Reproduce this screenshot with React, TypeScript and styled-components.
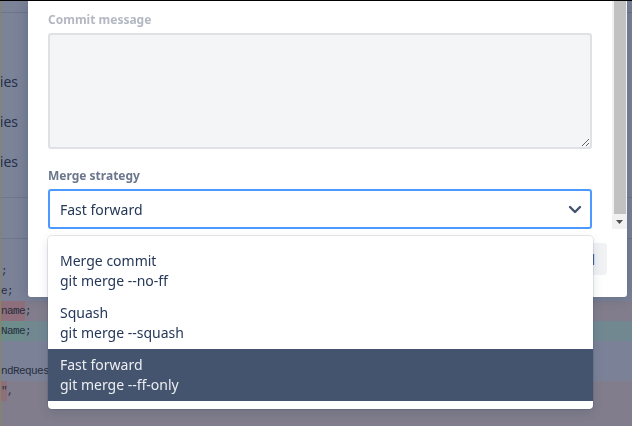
import React from "react";
import styled, { createGlobalStyle } from "styled-components";

const Global = createGlobalStyle`
  * { box-sizing: border-box; }
  html, body { margin: 0; padding: 0; width: 632px; height: 426px; overflow: hidden; }
  body {
    background: #7b8398;
    border-top: 1px solid #000;
    font-family: "Noto Sans", "DejaVu Sans", sans-serif;
  }
`;

const Page = styled.div`
  width: 632px;
  height: 425px;
  display: flex;
  flex-direction: column;
  border-left: 1px solid #8b8365;
  background: #7b8398;
  overflow: hidden;
`;

const TopBar = styled.div`
  height: 12px;
  flex: none;
  border-bottom: 1px solid #6c7589;
`;

const Nav = styled.nav`
  height: 185px;
  flex: none;
  padding-top: 48px;
  border-bottom: 1px solid #6e778b;
`;

const NavItem = styled.div`
  width: 17px;
  height: 40px;
  display: flex;
  align-items: center;
  justify-content: flex-end;
  white-space: nowrap;
  font-size: 14px;
  color: #26304a;
`;

const Toolbar = styled.div`
  height: 41px;
  flex: none;
  border-bottom: 1px solid #6e778b;
`;

const Code = styled.div`
  flex: none;
  display: flex;
  flex-direction: column;
  padding-top: 2px;
  background: #7b8297;
  font-family: "Liberation Mono", "DejaVu Sans Mono", monospace;
  font-size: 11px;
  letter-spacing: -0.6px;
  color: #262d40;
`;

const rowBg = { del: "#817d8c", add: "#728891", none: "#7b8297" } as const;
const markBg = { del: "#8e6f7b", add: "#6c8d8b" } as const;

const CodeRow = styled.div<{ $kind: "del" | "add" | "none" }>`
  height: 20px;
  flex: none;
  display: flex;
  align-items: center;
  white-space: pre;
  background: ${(p) => rowBg[p.$kind]};
`;

const CodeText = styled.span`
  margin-left: -60px;
  line-height: 16px;
`;

const Mark = styled.span<{ $kind: "del" | "add" }>`
  display: inline-block;
  height: 20px;
  line-height: 20px;
  background: ${(p) => markBg[p.$kind]};
`;

type Line = { kind: "del" | "add" | "none"; pre: string; token?: string; post?: string };

const lines: Line[] = [
  { kind: "none", pre: "" },
  { kind: "none", pre: "  callback;" },
  { kind: "none", pre: "   let mode;" },
  { kind: "del", pre: "  a = ", token: "lastname", post: ";" },
  { kind: "add", pre: "  b = ", token: "lastName", post: ";" },
  { kind: "none", pre: "" },
  { kind: "none", pre: "  await sendRequest(" },
  { kind: "del", pre: "   ", token: "\"/merge\"", post: "," },
  { kind: "del", pre: "" },
  { kind: "del", pre: "" },
];

/* ---------- modal ---------- */

const Backdrop = styled.div`
  position: fixed;
  inset: 1px 5px 0 28px;
  display: flex;
  align-items: flex-start;
`;

const Modal = styled.div`
  width: 599px;
  background: #fff;
  border-radius: 0 0 3px 3px;
  box-shadow: 0 0 14px rgba(9, 30, 66, 0.22);
  display: flex;
  flex-direction: column;
`;

const Body = styled.div`
  height: 228px;
  display: flex;
`;

const Content = styled.div`
  flex: 1;
  padding: 11px 20px 0;
  display: flex;
  flex-direction: column;
`;

const Label = styled.label<{ $faded?: boolean }>`
  display: block;
  height: 16px;
  line-height: 16px;
  margin-bottom: 5px;
  font-size: 12px;
  font-weight: 700;
  color: ${(p) => (p.$faded ? "#b3b8c3" : "#6b778c")};
`;

const TextArea = styled.textarea`
  display: block;
  width: 100%;
  height: 116px;
  margin: 0 0 19px;
  background: #f4f5f7;
  border: 2px solid #dfe1e6;
  border-radius: 3px;
  outline: none;
  font: inherit;
`;

const SelectWrap = styled.div`
  position: relative;
`;

const SelectBox = styled.div`
  height: 40px;
  border: 2px solid #4c9aff;
  border-radius: 3px;
  padding: 0 8px 0 10px;
  display: flex;
  align-items: center;
  justify-content: space-between;
  font-size: 14px;
  color: #253858;
`;

const Menu = styled.ul`
  position: absolute;
  top: calc(100% + 7px);
  left: 0;
  right: -1px;
  z-index: 10;
  margin: 0;
  padding: 9px 0 8px;
  list-style: none;
  background: #fff;
  border-radius: 4px;
  box-shadow: 0 0 0 1px rgba(9, 30, 66, 0.1), 0 4px 11px rgba(9, 30, 66, 0.12);
`;

const Option = styled.li<{ $selected?: boolean }>`
  padding: 6px 12px;
  font-size: 14px;
  line-height: 20px;
  color: ${(p) => (p.$selected ? "#eceef2" : "#253858")};
  background: ${(p) => (p.$selected ? "#44536e" : "transparent")};
`;

const Scrollbar = styled.div`
  width: 15px;
  flex: none;
  display: flex;
  flex-direction: column;
  background: #f1f1f1;
`;

const Thumb = styled.div`
  flex: 1;
  margin: 0 1px 0 2px;
  background: #c1c1c1;
`;

const ArrowButton = styled.div`
  height: 15px;
  flex: none;
  display: flex;
  align-items: center;
  justify-content: center;
`;

const Footer = styled.div`
  height: 68px;
  padding: 14px 20px 22px;
  display: flex;
  justify-content: flex-end;
  gap: 8px;
`;

const Button = styled.button<{ $primary?: boolean }>`
  height: 32px;
  padding: 0 12px;
  border: none;
  border-radius: 3px;
  font-family: inherit;
  font-size: 14px;
  background: ${(p) => (p.$primary ? "#0052cc" : "#f1f2f4")};
  color: ${(p) => (p.$primary ? "#fff" : "#42526e")};
`;

const options = [
  { title: "Merge commit", cmd: "git merge --no-ff" },
  { title: "Squash", cmd: "git merge --squash" },
  { title: "Fast forward", cmd: "git merge --ff-only" },
];

export default function App() {
  return (
    <>
      <Global />
      <Page>
        <TopBar />
        <Nav>
          <NavItem>Repositories</NavItem>
          <NavItem>Dependencies</NavItem>
          <NavItem>Properties</NavItem>
        </Nav>
        <Toolbar />
        <Code>
          {lines.map((l, i) => (
            <CodeRow key={i} $kind={l.kind}>
              <CodeText>
                {l.pre}
                {l.token && <Mark $kind={l.kind as "del" | "add"}>{l.token}</Mark>}
                {l.post}
              </CodeText>
            </CodeRow>
          ))}
        </Code>
      </Page>
      <Backdrop>
        <Modal>
          <Body>
            <Content>
              <Label $faded>Commit message</Label>
              <TextArea readOnly />
              <Label>Merge strategy</Label>
              <SelectWrap>
                <SelectBox>
                  <span>Fast forward</span>
                  <svg width="14" height="9" viewBox="0 0 14 9">
                    <polyline
                      points="2,2 7,7 12,2"
                      fill="none"
                      stroke="#44536e"
                      strokeWidth="2.4"
                      strokeLinecap="round"
                      strokeLinejoin="round"
                    />
                  </svg>
                </SelectBox>
                <Menu>
                  {options.map((o) => (
                    <Option key={o.title} $selected={o.title === "Fast forward"}>
                      <div>{o.title}</div>
                      <div>{o.cmd}</div>
                    </Option>
                  ))}
                </Menu>
              </SelectWrap>
            </Content>
            <Scrollbar>
              <Thumb />
              <ArrowButton>
                <svg width="7" height="4" viewBox="0 0 7 4">
                  <polygon points="0,0 7,0 3.5,4" fill="#505050" />
                </svg>
              </ArrowButton>
            </Scrollbar>
          </Body>
          <Footer>
            <Button $primary>Merge</Button>
            <Button>Cancel</Button>
          </Footer>
        </Modal>
      </Backdrop>
    </>
  );
}
